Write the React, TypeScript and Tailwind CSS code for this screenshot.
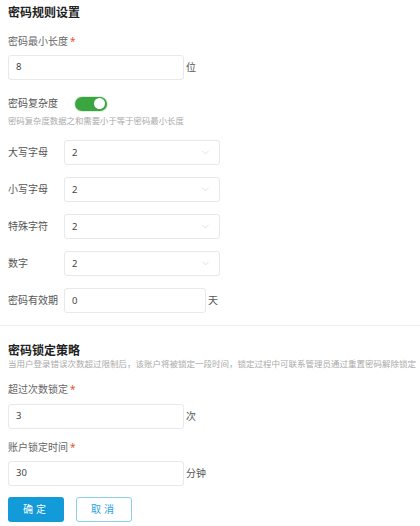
import { ChevronDown } from 'lucide-react';

const font = { fontFamily: '"Noto Sans", "Noto Sans CJK SC", sans-serif' };

function Label({ text, required }: { text: string; required?: boolean }) {
  return (
    <div className="flex h-[14px] items-center text-[10px] leading-none text-[#666]">
      {text}
      {required && <span className="ml-[2px] text-[#e4572e]">*</span>}
    </div>
  );
}

function TextBox({ value, unit, width = 'w-[176px]' }: { value: string; unit: string; width?: string }) {
  return (
    <div className="flex items-center">
      <div className={`flex h-[25px] ${width} items-center rounded-[3px] border border-[#e8e8e8] bg-white px-[7px] text-[9.5px] text-[#444]`}>
        {value}
      </div>
      <span className="ml-[2px] text-[10px] text-[#555]">{unit}</span>
    </div>
  );
}

function SelectRow({ label, value }: { label: string; value: string }) {
  return (
    <div className="flex items-center">
      <div className="w-[56px] text-[10px] text-[#555]">{label}</div>
      <div className="flex h-[25px] w-[156px] items-center justify-between rounded-[3px] border border-[#e8e8e8] bg-white pl-[7px] pr-[8px] text-[9.5px] text-[#444]">
        <span>{value}</span>
        <ChevronDown size={11} strokeWidth={1.2} className="text-[#c8c8c8]" />
      </div>
    </div>
  );
}

export default function App() {
  return (
    <div className="h-[526px] w-[420px] overflow-hidden bg-white" style={font}>
      <div className="px-[8px] pt-[5px]">
        <h2 className="text-[12px] font-bold leading-[16px] text-[#222]">密码规则设置</h2>

        <div className="mt-[13px]">
          <Label text="密码最小长度" required />
          <div className="mt-[7px]">
            <TextBox value="8" unit="位" />
          </div>
        </div>

        <div className="mt-[16px] flex items-center">
          <div className="w-[67px] text-[10px] text-[#555]">密码复杂度</div>
          <div className="flex h-[14px] w-[32px] items-center justify-end rounded-full bg-[#3ba53f] pr-[2px] shadow-[0_0_0_1px_#dceedd]">
            <div className="h-[11px] w-[11px] rounded-full bg-white" />
          </div>
        </div>
        <div className="mt-[6px] text-[8.4px] leading-none text-[#aaa]">密码复杂度数据之和需要小于等于密码最小长度</div>

        <div className="mt-[15px] flex flex-col gap-[12px]">
          <SelectRow label="大写字母" value="2" />
          <SelectRow label="小写字母" value="2" />
          <SelectRow label="特殊字符" value="2" />
          <SelectRow label="数字" value="2" />
          <div className="flex items-center">
            <div className="w-[56px] text-[10px] text-[#555]">密码有效期</div>
            <TextBox value="0" unit="天" width="w-[142px]" />
          </div>
        </div>
      </div>

      <div className="mt-[12px] h-px bg-[#efefef]" />

      <div className="px-[8px]">
        <h2 className="mt-[17px] text-[12px] font-bold leading-[16px] text-[#222]">密码锁定策略</h2>
        <div className="mt-[1px] whitespace-nowrap text-[8.5px] leading-none text-[#aaa]">
          当用户登录错误次数超过限制后，该账户将被锁定一段时间，锁定过程中可联系管理员通过重置密码解除锁定
        </div>

        <div className="mt-[13px]">
          <Label text="超过次数锁定" required />
          <div className="mt-[8px]">
            <TextBox value="3" unit="次" />
          </div>
        </div>

        <div className="mt-[11px]">
          <Label text="账户锁定时间" required />
          <div className="mt-[7px]">
            <TextBox value="30" unit="分钟" />
          </div>
        </div>

        <div className="mt-[11px] flex gap-[12px]">
          <button className="flex h-[25px] w-[56px] items-center justify-center rounded-[3px] bg-[#129bd8] text-[10px] tracking-[3px] text-white">
            确定
          </button>
          <button className="flex h-[25px] w-[56px] items-center justify-center rounded-[3px] border border-[#8ccdec] bg-white text-[10px] tracking-[3px] text-[#2a9fd8]">
            取消
          </button>
        </div>
      </div>
    </div>
  );
}
